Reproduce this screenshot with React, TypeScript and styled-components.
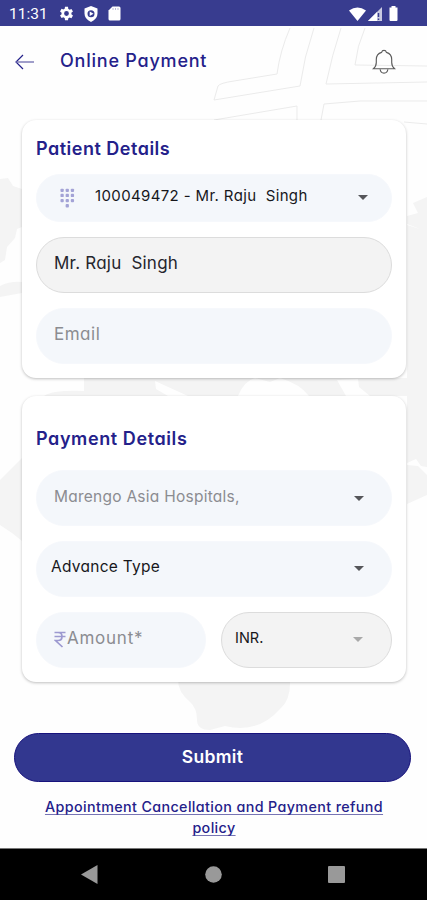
import React from "react";
import styled, { createGlobalStyle } from "styled-components";

const Global = createGlobalStyle`
  * { box-sizing: border-box; }
  body { margin: 0; background: #fff; }
`;

const NAVY = "#24218a";
const GREY = "#8b8c91";

const Screen = styled.div`
  position: relative;
  width: 427px;
  height: 900px;
  overflow: hidden;
  display: flex;
  flex-direction: column;
  background: #fefefe;
  font-family: Inter, "Open Sans", sans-serif;
  font-feature-settings: "cv11";
`;

const Backdrop = styled.svg`
  position: absolute;
  left: 0;
  top: 0;
`;

const StatusBar = styled.header`
  position: relative;
  height: 26px;
  flex: none;
  background: #383c8f;
  color: #fff;
  display: flex;
  align-items: center;
  padding: 1px 28px 0 9px;
`;
const Clock = styled.span`
  font: 15.5px Roboto, sans-serif;
  width: 50px;
`;
const StatusIcons = styled.div<{ $right?: boolean }>`
  display: flex;
  align-items: center;
  gap: ${(p) => (p.$right ? "2px" : "10px")};
  margin-left: ${(p) => (p.$right ? "auto" : "0")};
`;

const TitleBar = styled.div`
  position: relative;
  height: 94px;
  flex: none;
  display: flex;
  align-items: flex-start;
  padding: 21px 31px 0 15px;
`;
const BackIcon = styled.svg`
  margin-top: 7px;
`;
const BellIcon = styled.svg`
  margin-left: auto;
  margin-top: 2px;
`;

const Label = styled.span<{ $size: number; $weight?: number; $color?: string; $track?: number }>`
  font-size: ${(p) => p.$size}px;
  font-weight: ${(p) => p.$weight ?? 400};
  color: ${(p) => p.$color ?? "#17171b"};
  letter-spacing: ${(p) => p.$track ?? 0}px;
  white-space: pre;
  line-height: 26px;
`;
const Title = styled(Label)`
  margin-left: 25px;
  margin-top: 1px;
`;

const Card = styled.section<{ $height: number }>`
  position: relative;
  flex: none;
  height: ${(p) => p.$height}px;
  margin: 0 21px 18px 22px;
  padding: 16px 14px 0;
  border-radius: 14px;
  background: #fff;
  box-shadow: 0 1px 3px rgba(0, 0, 0, 0.25);
  display: flex;
  flex-direction: column;
`;
const Heading = styled(Label)<{ $gap: number; $top?: number }>`
  margin-top: ${(p) => p.$top ?? 0}px;
  margin-bottom: ${(p) => p.$gap}px;
`;

const Field = styled.div<{ $height?: number; $locked?: boolean; $pad?: number; $end?: number; $drop?: number }>`
  height: ${(p) => p.$height ?? 56}px;
  display: flex;
  align-items: center;
  padding: 0 ${(p) => p.$end ?? 27}px ${(p) => p.$drop ?? 4}px ${(p) => p.$pad ?? 17}px;
  border-radius: 28px;
  background: ${(p) => (p.$locked ? "#f3f3f3" : "#f4f7fb")};
  border: 1px solid ${(p) => (p.$locked ? "#dcdcdc" : "#f6f8fc")};
`;
const Stack = styled.div<{ $gap: number }>`
  display: flex;
  flex-direction: column;
  gap: ${(p) => p.$gap}px;
`;
const Pair = styled.div`
  display: grid;
  grid-template-columns: 170px 171px;
  gap: 15px;
`;
const Arrow = styled.i<{ $muted?: boolean }>`
  margin-left: auto;
  margin-top: 3px;
  border: 5px solid transparent;
  border-top-color: ${(p) => (p.$muted ? "#a9a9a9" : "#55565a")};
  border-bottom: 0;
`;
const KeypadIcon = styled.svg`
  margin: 3px 20px 0 6px;
`;
const RupeeIcon = styled.svg`
  margin: 3px 1px 0 0;
`;

const Submit = styled.button`
  position: relative;
  flex: none;
  height: 49px;
  margin: 33px 16px 0 14px;
  border: 1px solid #17127c;
  border-radius: 25px;
  background: #32378f;
  color: #fff;
  padding: 0 0 3px;
  font: 600 17.5px Inter, sans-serif;
  font-feature-settings: "cv11";
  letter-spacing: 0.35px;
`;
const PolicyLink = styled.a`
  position: relative;
  margin-top: 15px;
  padding-left: 1px;
  text-align: center;
  text-decoration: underline;
  text-decoration-color: #7774b4;
  text-decoration-thickness: 1px;
  text-underline-offset: 2px;
  text-decoration-skip-ink: none;
  color: ${NAVY};
  font-size: 14.3px;
  font-weight: 500;
  line-height: 20.5px;
  letter-spacing: 0.38px;
`;
const NavBar = styled.nav`
  position: relative;
  margin-top: auto;
  flex: none;
  height: 52px;
  background: #000;
  border-top: 1px solid #777;
  display: flex;
  align-items: center;
  justify-content: space-between;
  padding: 0 82px 0 81px;
`;

const keys = [0, 1, 2].flatMap((r) => [0, 1, 2].map((c) => [c, r])).concat([[1, 3]]);

export default function App() {
  return (
    <Screen>
      <Global />
      <Backdrop width="427" height="900" viewBox="0 0 427 900" fill="none">
        <path
          stroke="#ebebeb"
          d="M290 28Q280 51 277 74L234 81Q220 83 218 86L214 100L300 86Q304 57 314 28M341 28Q332 55 326 84L427 82M365 28Q357 46 355 65L427 66M214 120L297 106V120M321 120L324 104L360 101H427M404 122L427 124"
        />
        <g fill="#f4f4f4">
          <path d="M0 179L8 178L13 186L22 189V227L17 229L15 238L7 247L5 260L0 263ZM0 286Q10 281 22 282V293L0 297Z" />
          <path d="M84 378H427V396H44Q52 390 84 391ZM0 480L22 458V541L12 533L0 525Z" />
          <path d="M427 197L413 203L418 213L407 216V463L416 459L421 466L427 467ZM407 465L418 466L427 475V495L407 504ZM178 680H290Q291 700 280 709Q258 734 225 726L210 730Q197 730 197 720Q197 708 190 702Q178 692 178 680Z" />
        </g>
        <path
          fill="#fefefe"
          d="M238 396Q244 381 255 378L270 382L280 378Q300 384 309 396ZM337 380L358 379L359 387L370 396H346ZM155 381L188 396H168L156 389ZM407 224L420 229L407 225Z"
        />
      </Backdrop>

      <StatusBar>
        <Clock>11:31</Clock>
        <StatusIcons>
          <svg width="15" height="15" viewBox="2.9 2 20 20" fill="#fff">
            <path d="M19.4 13a7 7 0 0 0 0-2l2.1-1.6-2-3.5-2.500 1a7 7 0 0 0-1.700-1L14.900 3h-4l-.4 2.800a7 7 0 0 0-1.700 1l-2.500-1-2 3.500L6.400 11a7 7 0 0 0 0 2l-2.100 1.600 2 3.500 2.500-1a7 7 0 0 0 1.700 1l.4 2.900h4l.4-2.800a7 7 0 0 0 1.700-1l2.500 1 2-3.500zM12.900 15.200a3.200 3.200 0 1 1 0-6.400 3.200 3.200 0 0 1 0 6.400z" />
          </svg>
          <svg width="14" height="16" viewBox="0 0 14 16" fillRule="evenodd" fill="#fff">
            <path d="M7 0l6.500 2.500v5Q13.500 13 7 16Q.5 13 .5 7.500v-5zM7 4.200a3.500 3.500 0 1 0 0 7 3.500 3.500 0 0 0 0-7zM5.700 5.600l3.800 2.200-3.800 2.200z" />
          </svg>
          <svg width="13" height="15" viewBox="0 0 13 15">
            <path fill="#fff" d="M4.500 .5H11q1.500 0 1.500 1.500v11q0 1.500-1.500 1.500H2Q.5 14.500 .5 13V4.500z" />
            <path stroke="#b9bad8" d="M5 2v2M7.500 2v2M10 2v2" />
          </svg>
        </StatusIcons>
        <StatusIcons $right>
          <svg width="17" height="14" viewBox="0 0 17 14">
            <path fill="#fff" d="M0 3.500Q8.500-2.500 17 3.500L8.500 14z" />
          </svg>
          <svg width="15" height="14" viewBox="0 0 15 14">
            <path fill="#c9cae1" d="M0 14L14 0v14z" />
            <path fill="#fff" d="M0 14L9 5v9z" />
            <path stroke="#383c8f" strokeWidth="1.500" d="M10.500 6v4M10.500 11.500v1.500" />
          </svg>
          <svg width="14" height="15" viewBox="0 0 14 15">
            <path fill="#fff" d="M6.500 0h4v1.500h2V14q0 1-1 1h-6q-1 0-1-1V1.500h2z" />
          </svg>
        </StatusIcons>
      </StatusBar>

      <TitleBar>
        <BackIcon width="20" height="16" fill="none" stroke={NAVY}>
          <path strokeWidth="1.200" d="M8 1L1 8L8 15" />
          <path stroke="#6c69ad" strokeWidth="1.300" d="M1 8H19" />
        </BackIcon>
        <Title $size={18} $weight={500} $color={NAVY} $track={0.78}>Online Payment</Title>
        <BellIcon width="24" height="26" viewBox="0 0 24 27" fill="none" stroke="#5c5c5c" strokeWidth="1.200">
          <path d="M1 20.500Q4 18 4 14V11Q4 5 9.500 3.500Q10 1.500 12 1.500T14.500 3.500Q20 5 20 11V14Q20 18 23 20.500Z" />
          <path d="M8 21Q8.500 25 12 25T16 21" />
        </BellIcon>
      </TitleBar>

      <Card $height={258}>
        <Heading $gap={12} $size={18} $weight={600} $color={NAVY} $track={0.5}>Patient Details</Heading>
        <Stack $gap={15}>
          <Field $height={48} $end={23}>
            <KeypadIcon width="15" height="20" viewBox="0 0 16 21" fill="#a3a3d6">
              {keys.map(([c, r]) => (
                <rect key={`${c}-${r}`} x={c * 5.5 + 0.5} y={r * 5.5 + 0.5} width="3.500" height="3.500" rx="1" />
              ))}
            </KeypadIcon>
            <Label $size={15} $track={0.37}>100049472 - Mr. Raju  Singh</Label>
            <Arrow />
          </Field>
          <Field $locked>
            <Label $size={17} $track={0.22} $color="#25252d">Mr. Raju  Singh</Label>
          </Field>
          <Field $drop={5}>
            <Label $size={17} $track={0.5} $color={GREY}>Email</Label>
          </Field>
        </Stack>
      </Card>

      <Card $height={286}>
        <Heading $top={14} $gap={18} $size={18} $weight={600} $color={NAVY} $track={0.6}>Payment Details</Heading>
        <Stack $gap={15}>
          <Field $drop={2}>
            <Label $size={15.5} $track={0.25} $color={GREY}>Marengo Asia Hospitals,</Label>
            <Arrow />
          </Field>
          <Field $pad={14}>
            <Label $size={15.5} $track={0.27}>Advance Type</Label>
            <Arrow />
          </Field>
          <Pair>
            <Field $drop={5}>
              <RupeeIcon width="12" height="17" viewBox="0 0 12 17" fill="none" stroke="#9c99d0" strokeWidth="1.700">
                <path d="M.5 1.500H11.500M.5 5.500H11.500M.5 1.500H4Q8 1.500 8 5.500T4 9.500H1.500L8.500 16" />
              </RupeeIcon>
              <Label $size={17} $track={0.75} $color={GREY}>Amount*</Label>
            </Field>
            <Field $locked $pad={13} $end={28} $drop={5}>
              <Label $size={14.5}>INR.</Label>
              <Arrow $muted />
            </Field>
          </Pair>
        </Stack>
      </Card>

      <Submit>Submit</Submit>
      <PolicyLink>
        Appointment Cancellation and Payment refund
        <br />
        policy
      </PolicyLink>

      <NavBar>
        <svg width="17" height="19" fill="#999"><path d="M0 9.500L16.500 0V19z" /></svg>
        <svg width="17" height="17" fill="#999"><circle cx="8.500" cy="8.500" r="8.300" /></svg>
        <svg width="17" height="17" fill="#999"><rect width="17" height="17" rx="1" /></svg>
      </NavBar>
    </Screen>
  );
}
